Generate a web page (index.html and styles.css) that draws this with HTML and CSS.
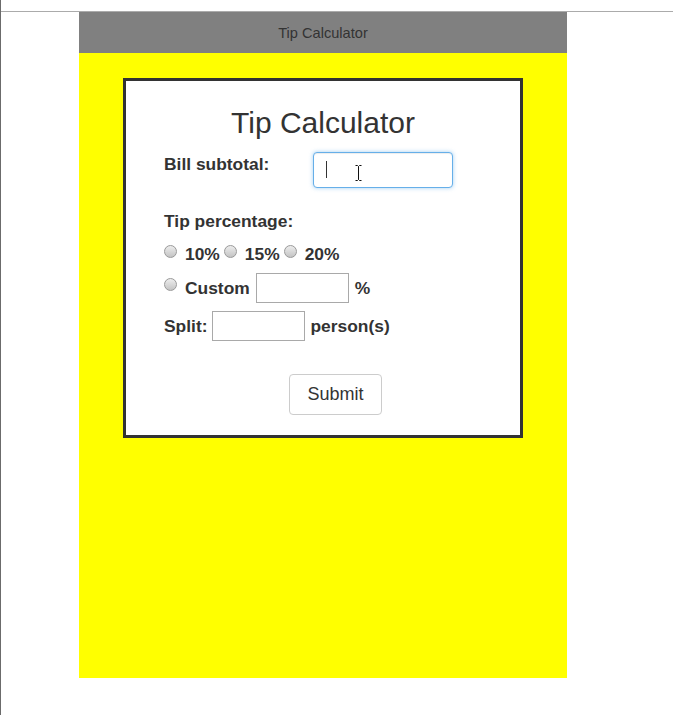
FILE: index.html
```html
<!DOCTYPE html>
<html lang="en">
<head>
<meta charset="utf-8">
<title>Tip Calculator</title>
<link rel="stylesheet" href="styles.css">
</head>
<body>
<div class="frame">
  <div class="topline"></div>
  <div class="app">
    <header class="appbar">Tip Calculator</header>
    <main class="stage">
      <section class="card">
        <h2 class="title">Tip Calculator</h2>
        <div class="row row-bill">
          <label class="lbl lbl-bill" for="bill">Bill subtotal:</label>
          <div class="field">
            <input id="bill" class="input-focus" type="text">
            <span class="caret"></span>
            <svg class="ibeam" width="9" height="18" viewBox="0 0 9 18" aria-hidden="true">
              <path d="M1.5 1.5h2l1 1 1-1h2M4.5 2.5v13M1.5 16.5h2l1-1 1 1h2" fill="none" stroke="#111" stroke-width="1"/>
            </svg>
          </div>
        </div>
        <div class="lbl tip-label">Tip percentage:</div>
        <div class="row row-radios">
          <input class="radio" type="radio" name="tip" value="10">
          <span class="lbl opt opt-a">10%</span>
          <input class="radio" type="radio" name="tip" value="15">
          <span class="lbl opt opt-b">15%</span>
          <input class="radio" type="radio" name="tip" value="20">
          <span class="lbl opt">20%</span>
        </div>
        <div class="row row-custom">
          <input class="radio radio-custom" type="radio" name="tip" value="custom">
          <span class="lbl lbl-line">Custom</span>
          <input class="small-input" type="text">
          <span class="lbl lbl-line">%</span>
        </div>
        <div class="row row-split">
          <span class="lbl lbl-line">Split:</span>
          <input class="small-input" type="text">
          <span class="lbl lbl-line">person(s)</span>
        </div>
        <div class="actions">
          <button class="btn" type="button">Submit</button>
        </div>
      </section>
    </main>
  </div>
</div>
</body>
</html>
```
FILE: styles.css
```css
html, body {
  margin: 0;
  padding: 0;
  background: #fff;
}

.frame {
  border-left: 1px solid #6b6b6b;
  height: 715px;
  box-sizing: border-box;
  overflow: hidden;
}

.topline {
  height: 11px;
  border-bottom: 1px solid #ababab;
}

.app {
  margin-left: 78px;
  width: 488px;
}

.appbar {
  height: 41px;
  background: #808080;
  color: #333;
  font-family: "Liberation Sans", Arial, sans-serif;
  font-size: 14.6px;
  line-height: 43px;
  text-align: center;
}

.stage {
  height: 625px;
  background: #ffff00;
  padding-top: 25px;
  box-sizing: border-box;
}

.card {
  width: 400px;
  height: 360px;
  margin: 0 auto;
  box-sizing: border-box;
  border: 3px solid #333;
  background: #fff;
  padding: 0 38px;
  font-family: "Liberation Sans", Arial, sans-serif;
  color: #333;
}

.title {
  margin: 25px 0 0;
  font-size: 30px;
  font-weight: 400;
  line-height: 33px;
  text-align: center;
}

.lbl {
  font-weight: bold;
  font-size: 17.4px;
  line-height: 24px;
}

.row {
  display: flex;
}

.row-bill {
  margin-top: 13px;
  align-items: flex-start;
}

.lbl-bill {
  width: 149px;
  flex: none;
}

.field {
  position: relative;
  width: 140px;
  height: 36px;
}

.input-focus {
  display: block;
  width: 140px;
  height: 36px;
  margin: 0;
  box-sizing: border-box;
  border: 1px solid #66afe9;
  border-radius: 4px;
  outline: none;
  background: #fff;
  box-shadow: inset 0 1px 1px rgba(0, 0, 0, 0.075), 0 0 4px rgba(102, 175, 233, 0.6);
}

.caret {
  position: absolute;
  left: 13px;
  top: 9px;
  width: 1px;
  height: 17px;
  background: #333;
}

.ibeam {
  position: absolute;
  left: 41px;
  top: 12px;
}

.tip-label {
  margin-top: 21px;
}

.row-radios {
  margin-top: 9px;
  height: 24px;
  align-items: flex-start;
}

.radio {
  -webkit-appearance: none;
  appearance: none;
  flex: none;
  width: 13px;
  height: 13px;
  margin: 3px 8px 0 0;
  border-radius: 50%;
  border: 1px solid #9a9a9a;
  background: linear-gradient(#ededed, #c4c4c4);
  box-sizing: border-box;
}

.opt-a {
  margin-right: 4px;
}

.opt-b {
  margin-right: 4px;
}

.row-custom {
  margin-top: 7px;
  height: 30px;
  align-items: center;
  gap: 6px;
}

.radio-custom {
  align-self: flex-start;
  margin: 5px 2px 0 0;
}

.lbl-line {
  line-height: 30px;
}

.small-input {
  flex: none;
  width: 93px;
  height: 30px;
  margin: 0;
  box-sizing: border-box;
  border: 1px solid #a9a9a9;
  background: #fff;
}

.row-split {
  margin-top: 8px;
  height: 30px;
  align-items: center;
  gap: 5px;
}

.actions {
  margin-top: 33px;
  padding-left: 125px;
}

.btn {
  width: 93px;
  height: 41px;
  box-sizing: border-box;
  border: 1px solid #ccc;
  border-radius: 4px;
  background: #fff;
  color: #333;
  font-family: "Liberation Sans", Arial, sans-serif;
  font-size: 18px;
  padding: 0;
}
```
